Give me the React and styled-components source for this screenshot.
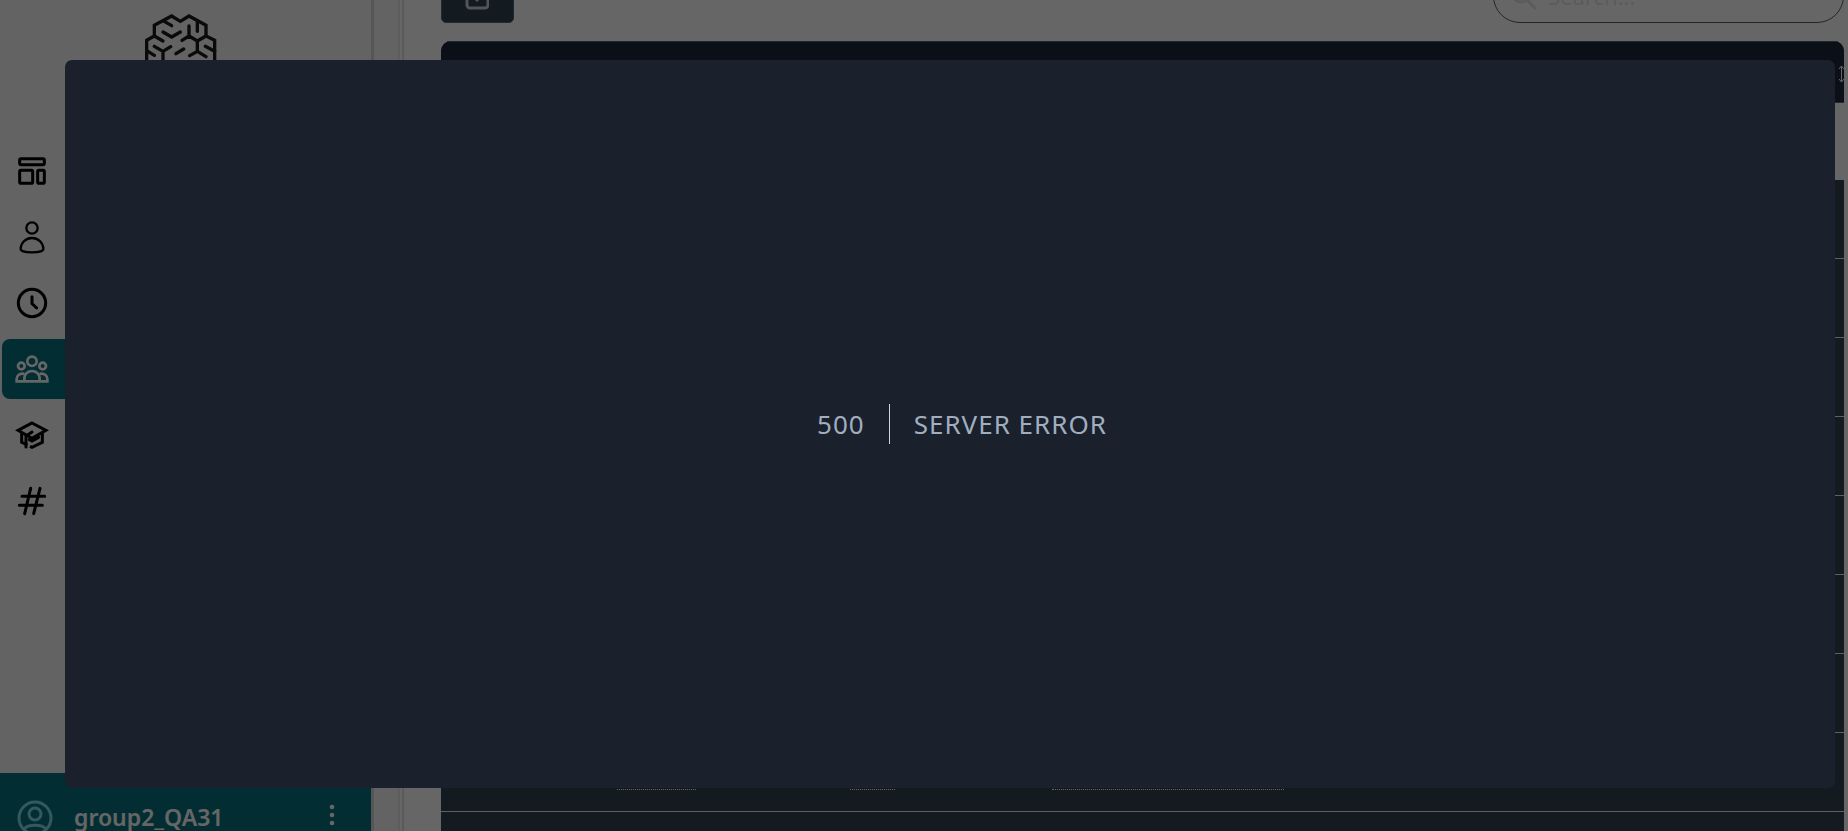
import styled, { createGlobalStyle } from "styled-components";

const GlobalStyle = createGlobalStyle`
  * {
    box-sizing: border-box;
  }
  body {
    margin: 0;
    font-family: "Noto Sans", "Open Sans", sans-serif;
    background-color: #fff;
  }
`;
const Page = styled.div`
  display: flex;
  height: 100vh;
  overflow: hidden;
`;
const Sidebar = styled.aside`
  flex: 0 0 374px;
  display: flex;
  flex-direction: column;
  background-color: #f7f7f7;
  border-right: 3px solid #d6d6d6;
`;
const LogoLink = styled.a`
  display: flex;
  justify-content: center;
  height: 141px;
  padding: 8px 12px 0 0;
`;
const Nav = styled.nav`
  flex: 1;
  display: flex;
  flex-direction: column;
  gap: 6px;
  padding: 0 2px;
`;
const NavItem = styled.a`
  display: flex;
  align-items: center;
  height: 60px;
  padding-left: 13px;
  border-radius: 8px;
  color: ${props => props.$active ? "#fff" : "#000"};
  background-color: ${props => props.$active ? "#07737f" : "transparent"};
`;
const UserBar = styled.footer`
  display: flex;
  align-items: flex-start;
  gap: 21px;
  height: 58px;
  padding: 27px 29px 0 17px;
  background-color: #07737f;
  color: #fff;
`;
const UserName = styled.span`
  flex: 1;
  font-size: 23px;
  line-height: 34px;
  font-weight: 600;
`;
const MenuButton = styled.button`
  display: flex;
  padding: 4px 0 0;
  border: 0;
  background-color: transparent;
  color: inherit;
`;
const Gutter = styled.div`
  flex: 0 0 30px;
  background-color: #f7f7f7;
  border-right: 2px solid #e0e0e0;
  box-shadow: inset -2px 0 #fff, inset -4px 0 #e8e8e8;
`;
const Main = styled.main`
  flex: 1;
  min-width: 0;
  padding: 0 4px 0 37px;
  background-color: #fff;
`;
/* scrolled: only the lower edge of the controls is on screen */
const Toolbar = styled.div`
  display: flex;
  justify-content: space-between;
  align-items: flex-end;
  height: 23px;
  margin-bottom: 18px;
`;
const ActionButton = styled.button`
  display: flex;
  justify-content: center;
  align-items: center;
  width: 73px;
  height: 54px;
  padding: 0 2px 0 0;
  border: 1px solid #566579;
  border-radius: 5px;
  background-color: #304150;
  color: #cbd5e0;
`;
const SearchBox = styled.label`
  display: flex;
  align-items: center;
  gap: 10px;
  width: 351px;
  height: 54px;
  padding: 0 16px;
  border: 1px solid #4e6073;
  border-radius: 27px;
  color: #dfe5ea;
`;
const SearchInput = styled.input`
  flex: 1;
  min-width: 0;
  padding: 0;
  border: 0;
  background-color: transparent;
  font: 22px "Noto Sans", sans-serif;
  color: #304150;
  &::placeholder {
    color: #dfe5ea;
  }
`;
const TableFrame = styled.div`
  overflow: hidden;
  border-radius: 10px 10px 0 0;
`;
const Table = styled.table`
  width: 100%;
  table-layout: fixed;
  border-collapse: separate;
  border-spacing: 0;
  background-color: #304150;
`;
const HeadCell = styled.th`
  width: ${props => props.$width || "auto"};
  height: 62px;
  padding: 0;
  border-top: 1px solid #566579;
  border-bottom: 1px solid #566579;
  background-color: #1c283c;
  color: #fff;
`;
const SortButton = styled.button`
  display: flex;
  margin-left: auto;
  padding: 4px 0 0;
  border: 0;
  background-color: transparent;
  color: #fff;
`;
const Cell = styled.td`
  height: ${props => props.$filter ? "77px" : "79px"};
  padding: 0;
  background-color: ${props => props.$filter ? "#fff" : "transparent"};
  border-bottom: ${props => props.$filter ? "0" : "1px solid #ecf0f2"};
`;
const Hint = styled.span`
  display: block;
  width: ${props => props.$width};
  height: 35px;
  border-bottom: 1px dotted #fff;
`;
const Overlay = styled.div`
  position: fixed;
  inset: 0;
  display: flex;
  padding: 60px 13px 43px 65px;
  background-color: rgba(0, 0, 0, 0.6);
`;
const Modal = styled.section`
  flex: 1;
  display: flex;
  align-items: center;
  justify-content: center;
  border-radius: 7px;
  background-color: #1a202c;
  color: #a0aec0;
  font-size: 26px;
  line-height: 40px;
  letter-spacing: 1px;
`;
const ErrorCode = styled.div`
  padding: 0 24px;
  border-right: 1px solid #cbd5e0;
`;
const ErrorText = styled.div`
  padding: 0 0 0 24px;
  text-transform: uppercase;
`;

const Icon = ({ stroke = 9, children }) => (
  <svg width="34" height="34" viewBox="-51 -51 102 102" fill="none" stroke="currentColor" strokeWidth={stroke} strokeLinecap="round" aria-hidden="true">
    {children}
  </svg>
);

const navItems = [
  {
    name: "Dashboard",
    icon: (
      <Icon>
        <rect x="-37" y="-37" width="74" height="18" rx="4" />
        <rect x="-37" y="-2" width="39" height="39" rx="4" />
        <rect x="17" y="-2" width="20" height="39" rx="4" />
      </Icon>
    ),
  },
  {
    name: "Profile",
    icon: (
      <Icon stroke={7}>
        <circle cx="0" cy="-27" r="17" />
        <path d="M-34 37C-34 17-18 3 0 3S34 17 34 37C34 43 16 46 0 46S-34 43-34 37Z" />
      </Icon>
    ),
  },
  {
    name: "History",
    icon: (
      <Icon>
        <circle cx="0" cy="0" r="41" />
        <path d="M0-19V2L14 15" />
      </Icon>
    ),
  },
  {
    name: "Groups",
    active: true,
    icon: (
      <Icon stroke={8}>
        <circle cx="0" cy="-23" r="14" />
        <circle cx="-32" cy="-9" r="10" />
        <circle cx="32" cy="-9" r="10" />
        <path d="M-23 37V28C-23 14-12 6 0 6S23 14 23 28V37M-26 14C-38 13-46 20-46 30V37H46V30C46 20 38 13 26 14" />
      </Icon>
    ),
  },
  {
    name: "Courses",
    icon: (
      <Icon>
        <path strokeLinecap="butt" d="M0-36L42-14L0 10L-42-14Z" />
        <path strokeLinecap="butt" d="M-31-6V22L-14 30M-6 34L0 37L31 22V-6" />
        <path d="M0-9L-18 3V36M-8 14L0 18L20 7" />
      </Icon>
    ),
  },
  {
    name: "Tags",
    icon: (
      <Icon>
        <path d="M-30-14H38M-38 13H31M-4-38L-22 38M24-38L5 38" />
      </Icon>
    ),
  },
];

const columns = ["176px", "233px", "202px", null];
const hints = ["79px", "45px", "232px"];
const rows = [1, 2, 3, 4, 5, 6, 7, 8, 9, 10];
const hintRow = 8;

function BrainLogo() {
  return (
    <svg width="84" height="54" viewBox="0 0 252 162" fill="none" stroke="#1a1a1a" strokeWidth="10" strokeLinecap="round" aria-hidden="true">
      <path d="M26 162V97L49 84V52L101 24L127 40L153 24L204 52V84L230 97V162" />
      <path d="M75 38L101 53M75 72L101 87L127 72M49 84L75 99M153 54V84L178 99L204 84M153 84L132 97M178 40V70" />
      <path d="M178 99V130L204 146M178 130L155 143M202 115L230 130M26 128L49 142M49 115L75 130L98 116M75 130V162M114 137L137 123" />
    </svg>
  );
}

export default function App() {
  return (
    <>
      <GlobalStyle />
      <Page>
        <Sidebar>
          <LogoLink href="#" aria-label="Home">
            <BrainLogo />
          </LogoLink>
          <Nav>
            {navItems.map(item => (
              <NavItem key={item.name} href="#" aria-label={item.name} $active={item.active}>
                {item.icon}
              </NavItem>
            ))}
          </Nav>
          <UserBar>
            <svg width="36" height="36" viewBox="0 0 36 36" fill="none" stroke="#7fdfe6" strokeWidth="3" aria-hidden="true">
              <circle cx="18" cy="18" r="16" />
              <circle cx="18" cy="14" r="6" />
              <path d="M7 29C11 24 25 24 29 29" />
            </svg>
            <UserName>group2_QA31</UserName>
            <MenuButton aria-label="User menu">
              <svg width="20" height="28" viewBox="0 0 20 28" fill="currentColor">
                <circle cx="10" cy="3" r="2.3" />
                <circle cx="10" cy="11" r="2.3" />
                <circle cx="10" cy="19" r="2.3" />
              </svg>
            </MenuButton>
          </UserBar>
        </Sidebar>
        <Gutter />
        <Main>
          <Toolbar>
            <ActionButton aria-label="Select">
              <svg width="24" height="28" viewBox="0 0 24 28" fill="none" stroke="currentColor" strokeWidth="3">
                <rect x="2" y="2" width="21" height="24" rx="3" />
                <path d="M8 14L12 18L16 14" />
              </svg>
            </ActionButton>
            <SearchBox>
              <svg width="28" height="28" viewBox="0 0 28 28" fill="none" stroke="currentColor" strokeWidth="3" aria-hidden="true">
                <circle cx="11" cy="12" r="8" />
                <path d="M17 18L26 27" />
              </svg>
              <SearchInput type="text" placeholder="Search..." aria-label="Search" />
            </SearchBox>
          </Toolbar>
          <TableFrame>
            <Table>
              <thead>
                <tr>
                  {columns.map((width, i) => (
                    <HeadCell key={i} $width={width}>
                      {i === columns.length - 1 && (
                        <SortButton aria-label="Sort">
                          <svg width="6" height="18" viewBox="0 0 6 18" fill="none" stroke="currentColor">
                            <path d="M3.5 1V17M1 4L3.5 1L6 4M1 14L3.5 17L6 14" />
                          </svg>
                        </SortButton>
                      )}
                    </HeadCell>
                  ))}
                </tr>
              </thead>
              <tbody>
                <tr>
                  <Cell $filter colSpan={4} />
                </tr>
                {rows.map(row => (
                  <tr key={row}>
                    <Cell />
                    {hints.map(width => (
                      <Cell key={width}>{row === hintRow && <Hint $width={width} />}</Cell>
                    ))}
                  </tr>
                ))}
              </tbody>
            </Table>
          </TableFrame>
        </Main>
      </Page>
      <Overlay>
        <Modal role="dialog" aria-modal="true" aria-label="Server error">
          <ErrorCode>500</ErrorCode>
          <ErrorText>Server Error</ErrorText>
        </Modal>
      </Overlay>
    </>
  );
}
